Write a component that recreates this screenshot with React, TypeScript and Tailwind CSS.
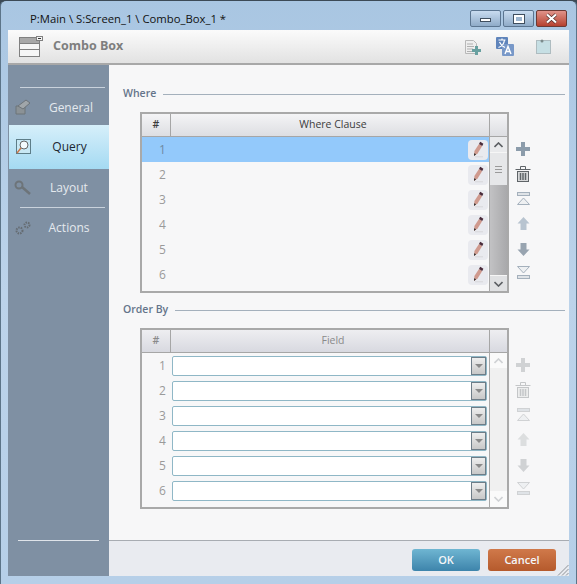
import React from "react";

const Plus = ({ dim }: { dim?: boolean }) => (
  <svg width="14" height="14" viewBox="0 0 14 14"><path d="M5 0h4v5h5v4H9v5H5V9H0V5h5z" fill={dim ? "#d0d2d4" : "#8c9cab"} /></svg>
);
const Trash = ({ dim }: { dim?: boolean }) => {
  const c = dim ? "#c4c6c8" : "#5f6468";
  return (
    <svg width="16" height="16" viewBox="0 0 16 16" fill="none" stroke={c}>
      <path d="M0.5 3.5h15M5.5 3V.5h5V3" />
      <rect x="2.5" y="5.5" width="11" height="10" fill={dim ? "#eceded" : "#d8d9da"} />
      <path d="M5.5 7v7M8 7v7M10.5 7v7" strokeWidth="1.5" />
    </svg>
  );
};
const Arrow = ({ type, dim }: { type: "first" | "up" | "down" | "last"; dim?: boolean }) => {
  const a = dim ? "#d0d2d4" : "#a4b0bc";
  const b = dim ? "#dcdedf" : "#b8c4d0";
  if (type === "first")
    return (
      <svg width="13" height="13" viewBox="0 0 13 13">
        <rect x=".5" y=".5" width="12" height="3" fill="#dfe3e7" stroke={a} />
        <path d="M.5 12.5 6.5 6l6 6.5z" fill="#eef0f2" stroke={a} />
      </svg>
    );
  if (type === "last")
    return (
      <svg width="13" height="13" viewBox="0 0 13 13">
        <path d="M.5.5 6.5 7l6-6.5z" fill="#eef0f2" stroke={a} />
        <rect x=".5" y="9.5" width="12" height="3" fill="#dfe3e7" stroke={a} />
      </svg>
    );
  if (type === "up")
    return (
      <svg width="13" height="13" viewBox="0 0 13 13">
        <path d="M6.5 0 12.5 6.5H9.5V13H3.5V6.5H.5z" fill={b} />
      </svg>
    );
  return (
    <svg width="13" height="13" viewBox="0 0 13 13">
      <path d="M6.5 13 12.5 6.5H9.5V0H3.5V6.5H.5z" fill={dim ? "#d0d2d4" : "#98a4b0"} />
    </svg>
  );
};

const Pencil = () => (
  <div className="w-[20px] h-[20px] rounded-[4px] bg-[#e9eaef] flex items-center justify-center">
    <svg width="14" height="17" viewBox="0 0 14 17">
      <path d="M3 15 3.4 10 8 3l3.2 2-4.6 7.5z" fill="#cf9a8e" />
      <path d="M8 3 9.2.8l3.2 2L11.2 5z" fill="#4a2b3a" />
      <path d="M3 15 3.2 12.2l1.9 1.1z" fill="#2a2a2a" />
      <path d="M4 15.8h8" stroke="#d6d6da" strokeWidth="1" />
    </svg>
  </div>
);

const Chevron = ({ dir, dim }: { dir: "up" | "down"; dim?: boolean }) => (
  <svg width="9" height="6" viewBox="0 0 9 6" fill="none">
    <path d={dir === "up" ? "M.5 5 4.5 1l4 4" : "M.5 1l4 4 4-4"} stroke={dim ? "#cfd1d4" : "#5c5f63"} strokeWidth="1.6" />
  </svg>
);

const Scrollbar = ({ dim }: { dim?: boolean }) => (
  <div className={`w-[18px] shrink-0 flex flex-col ${dim ? "bg-[#f0f0f0]" : "bg-gradient-to-r from-[#c2c2c4] to-[#a9a9ab]"} border-l border-[#a8a8a8]`}>
    <div className={`h-[15px] flex items-center justify-center ${dim ? "bg-[#fafafa]" : "bg-[#e9eaec]"}`}>
      <Chevron dir="up" dim={dim} />
    </div>
    {!dim && (
      <div className="h-[33px] bg-[#e6e7e9] border-t border-[#f6f6f6] flex flex-col gap-[2px] items-center justify-center">
        <div className="w-[7px] h-px bg-[#9a9a9a]" />
        <div className="w-[7px] h-px bg-[#9a9a9a]" />
        <div className="w-[7px] h-px bg-[#9a9a9a]" />
      </div>
    )}
    <div className="flex-1" />
    <div className={`h-[16px] flex items-center justify-center ${dim ? "bg-[#fafafa]" : "bg-[#e0e1e3] border-t border-[#f6f6f6]"}`}>
      <Chevron dir="down" dim={dim} />
    </div>
  </div>
);

const SideTools = ({ dim }: { dim?: boolean }) => (
  <div className="w-[16px] ml-[6px] pt-[30px] flex flex-col items-center">
    <div className="h-[24px]"><Plus dim={dim} /></div>
    <div className="h-[26px]"><Trash dim={dim} /></div>
    <div className="h-[25px]"><Arrow type="first" dim={dim} /></div>
    <div className="h-[26px]"><Arrow type="up" dim={dim} /></div>
    <div className="h-[23px]"><Arrow type="down" dim={dim} /></div>
    <div className="h-[13px]"><Arrow type="last" dim={dim} /></div>
  </div>
);

const rows = [1, 2, 3, 4, 5, 6];

const Table = ({ title, dim, children }: { title: string; dim?: boolean; children: (n: number) => React.ReactNode }) => (
  <div className="ml-[31px] flex">
    <div className="w-[369px] h-[181px] border-2 border-[#a9a9a9] flex flex-col bg-[#f7f7f8]">
      <div className={`h-[23px] flex border-b border-[#a6a6a6] bg-gradient-to-b ${dim ? "from-[#eeeef1] to-[#d8d9e0] text-[#8a8a8a]" : "from-[#f4f4f6] to-[#dddee2] text-[#3c3c3c]"} text-[10.5px]`}>
        <div className="w-[29px] border-r border-[#a6a6a6] flex items-center justify-center font-semibold">#</div>
        <div className="flex-1 flex items-center justify-center pl-[6px]">{title}</div>
        <div className="w-[18px] border-l border-[#a6a6a6]" />
      </div>
      <div className="flex-1 flex min-h-0">
        <div className="flex-1 min-w-0 flex flex-col">
          {rows.map((n) => (
            <div key={n} className={`h-[25px] flex items-center ${!dim && n === 1 ? "bg-[#93c9fb]" : ""}`}>
              <div className={`w-[29px] pl-[12px] text-center text-[12px] ${!dim && n === 1 ? "text-[#6f8aa3]" : "text-[#9a9a9a]"}`}>{n}</div>
              <div className="flex-1 flex items-center min-w-0">{children(n)}</div>
            </div>
          ))}
        </div>
        <Scrollbar dim={dim} />
      </div>
    </div>
    <SideTools dim={dim} />
  </div>
);

const Combo = () => (
  <div className="mx-[2px] ml-[1px] h-[20px] w-full border border-[#8fb7c6] rounded-[2px] bg-white flex justify-end">
    <div className="w-[15px] h-[18px] border border-[#6e7d88] bg-gradient-to-b from-[#eeeeee] to-[#c8c8c8] flex items-center justify-center">
      <div className="w-0 h-0 border-l-[4px] border-r-[4px] border-t-[4px] border-l-transparent border-r-transparent border-t-[#8a8a8a]" />
    </div>
  </div>
);

const Section = ({ label }: { label: string }) => (
  <div className="ml-[14px] mr-[4px] h-[16px] flex items-center gap-[7px] text-[10.5px] font-semibold text-[#64748a]">
    <span>{label}</span>
    <div className="flex-1 h-px bg-[#a4b0bc]" />
  </div>
);

const Divider = () => <div className="h-px bg-[#c9d2dc] ml-[12px] mr-[4px]" />;

const NavItem = ({ label, icon, h, active, textTop = 0, textLeft = 0 }: { label: string; icon: React.ReactNode; h: number; active?: boolean; textTop?: number; textLeft?: number }) => (
  <div
    className={`flex items-center text-[12px] ${active ? "ml-px bg-gradient-to-b from-[#d6effa] to-[#a4daf2] text-[#1c2733]" : "text-[#e4e9ee]"}`}
    style={{ height: h }}
  >
    <div className="w-[30px] flex justify-center">{icon}</div>
    <div className="flex-1 text-center pr-[9px]" style={{ paddingTop: textTop, paddingLeft: textLeft }}>{label}</div>
  </div>
);

const Btn = ({ label, cls }: { label: string; cls: string }) => (
  <div className={`w-[68px] h-[22px] rounded-[3px] flex items-center justify-center text-[11px] font-semibold text-[#f4f6f8] ${cls}`}>{label}</div>
);

export default function App() {
  return (
    <div className="w-[577px] h-[584px] bg-[#3c4a56]">
      <div className="w-[577px] h-[584px] rounded-t-[6px] bg-gradient-to-b from-[#a9c6e2] via-[#bcd3ea] to-[#b6cfe8] flex flex-col overflow-hidden relative border-t border-[#3c4a56] border-x border-x-[#5c7488]" style={{ fontFamily: '"Open Sans", "Noto Sans", sans-serif' }}>
        <div className="h-[29px] flex items-start pl-[29px] pr-[9px] pt-[9px] shrink-0">
          <div className="text-[11.3px] leading-[18px] text-[#111]">P:Main \ S:Screen_1 \ Combo_Box_1 *</div>
          <div className="ml-auto flex gap-[2px]">
            <div className="w-[31px] h-[17px] rounded-[2px] border border-[#5b7590] bg-gradient-to-b from-[#c9dcf0] to-[#8fabc8] flex items-center justify-center pt-[3px]">
              <div className="w-[11px] h-[4px] bg-white border border-[#3f4e5e]" />
            </div>
            <div className="w-[31px] h-[17px] rounded-[2px] border border-[#5b7590] bg-gradient-to-b from-[#c9dcf0] to-[#8fabc8] flex items-center justify-center">
              <div className="w-[10px] h-[8px] border-2 border-white outline outline-1 outline-[#3f4e5e] bg-[#9cb5cf]" />
            </div>
            <div className="w-[31px] h-[17px] rounded-[2px] border border-[#6c3a34] bg-gradient-to-b from-[#e0938a] to-[#b5402f] flex items-center justify-center text-white">
              <svg width="13" height="11" viewBox="0 0 13 11"><path d="M2 1.5 11 9.5M11 1.5 2 9.5" stroke="#4a2a28" strokeWidth="3.4" /><path d="M2 1.5 11 9.5M11 1.5 2 9.5" stroke="#fff" strokeWidth="2.2" /></svg>
            </div>
          </div>
        </div>

        <div className="mx-[7px] flex-1 flex flex-col min-h-0">
          <div className="h-[35px] shrink-0 bg-gradient-to-b from-[#fbfbfb] to-[#e2e2e2] border-b-2 border-[#a8a8a8] flex items-center">
            <div className="ml-[11px]">
              <svg width="24" height="21" viewBox="0 0 24 21">
                <rect x=".5" y="1.5" width="20" height="19" fill="#f6f6f6" stroke="#808080" />
                <rect x=".5" y="1.5" width="20" height="6" fill="#a8a8a8" stroke="#808080" />
                <path d="M1 13.5h20" stroke="#808080" />
                <rect x="17.5" y=".5" width="6" height="4" fill="#f4f4f4" stroke="#808080" />
                <rect x="19" y="2" width="3" height="1" fill="#333" />
              </svg>
            </div>
            <div className="ml-[10px] text-[12.5px] font-bold text-[#7e7e7e]">Combo Box</div>
            <div className="ml-auto flex items-center mr-[18px]">
              <svg width="17" height="16" viewBox="0 0 17 16" className="mr-[15px]">
                <path d="M1.5 1.5h8l3 3v10h-11z" fill="#eee" stroke="#b8b8b8" />
                <path d="M3 5h6M3 7.5h7M3 10h6M3 12.5h5" stroke="#b0b0b0" />
                <path d="M11 7h3v3h3v3h-3v3h-3v-3H8v-3h3z" fill="#68a0a0" />
              </svg>
              <svg width="18" height="19" viewBox="0 0 18 19" className="mr-[22px]">
                <rect x="0" y="0" width="12" height="12" rx="1" fill="#5f84bb" />
                <rect x="6" y="7" width="12" height="12" rx="1" fill="#7898c8" />
                <path d="M2.5 3h7M6 1.5V3M8.5 3C8 7 5.5 9.5 2.5 10.5M3.5 5C4.5 7.5 6.5 9.5 9 10.5" stroke="#fff" strokeWidth="1.2" fill="none" />
                <path d="M9 17 12 9.5 15 17M10 14.5h4" stroke="#fff" strokeWidth="1.4" fill="none" />
              </svg>
              <svg width="15" height="15" viewBox="0 0 15 15">
                <rect x=".5" y="1.5" width="14" height="13" fill="#c6dfe4" stroke="#aebcc0" />
                <circle cx="6" cy="2" r="1.5" fill="#7b8b8c" />
              </svg>
            </div>
          </div>

          <div className="flex-1 flex min-h-0">
            <div className="w-[101px] shrink-0 bg-[#7f90a3] flex flex-col">
              <div className="pt-[22px]">
                <Divider />
              </div>
              <NavItem
                h={37}
                label="General"
                textTop={2}
                textLeft={4}
                icon={
                  <svg width="16" height="16" viewBox="0 0 16 16"><path d="M1 7h9v8H1z" fill="#8b9296" stroke="#6d7479" /><path d="M3 7l8-6 4 3-7 6z" fill="#a0a6aa" stroke="#6d7479" /></svg>
                }
              />
              <NavItem
                h={44}
                active
                label="Query"
                icon={
                  <svg width="16" height="16" viewBox="0 0 16 16" fill="none"><rect x=".5" y=".5" width="14" height="14" fill="#c8e8f4" stroke="#5d7d88" /><circle cx="8" cy="6" r="4" fill="#f4fbfd" stroke="#666" /><path d="M5 9 1 14" stroke="#c9774a" strokeWidth="1.5" /></svg>
                }
              />
              <NavItem
                h={38}
                label="Layout"
                icon={
                  <svg width="18" height="16" viewBox="0 0 18 16" fill="none"><circle cx="5" cy="5" r="3.5" stroke="#6d7479" strokeWidth="2" /><path d="M8 7l8 7" stroke="#6d7479" strokeWidth="2.5" /></svg>
                }
              />
              <Divider />
              <NavItem
                h={39}
                label="Actions"
                icon={
                  <svg width="17" height="14" viewBox="0 0 17 14" fill="none" stroke="#656c72" strokeDasharray="1.5 1"><circle cx="4.5" cy="9.5" r="3" strokeWidth="2" /><circle cx="12" cy="4" r="2.5" strokeWidth="2" /></svg>
                }
              />
              <div className="flex-1" />
              <div className="h-px bg-[#dfe4ea] ml-[10px] mr-[10px] mb-[35px]" />
            </div>

            <div className="flex-1 min-w-0 flex flex-col">
              <div className="h-[476px] bg-[#f7f7f8] border-b border-[#a8acb2] pt-[21px]">
                <Section label="Where" />
                <div className="h-[10px]" />
                <Table title="Where Clause">
                  {() => (
                    <div className="ml-auto mr-[1px]">
                      <Pencil />
                    </div>
                  )}
                </Table>
                <div className="h-[9px]" />
                <Section label="Order By" />
                <div className="h-[10px]" />
                <Table title="Field" dim>
                  {() => <Combo />}
                </Table>
              </div>
              <div className="flex-1 bg-[#e9ebf0] flex items-center justify-end gap-[8px] pr-[13px] pt-[3px] relative">
                <Btn label="OK" cls="bg-gradient-to-b from-[#6fb6d2] to-[#3d84ab]" />
                <Btn label="Cancel" cls="bg-gradient-to-b from-[#d0794a] to-[#b55a2c]" />
                <svg width="12" height="12" viewBox="0 0 12 12" className="absolute right-0 bottom-0" stroke="#8d9298"><path d="M11.5 1 1 11.5M11.5 5 5 11.5M11.5 9 9 11.5" /></svg>
              </div>
            </div>
          </div>
        </div>
        <div className="h-[8px] shrink-0" />
      </div>
    </div>
  );
}
